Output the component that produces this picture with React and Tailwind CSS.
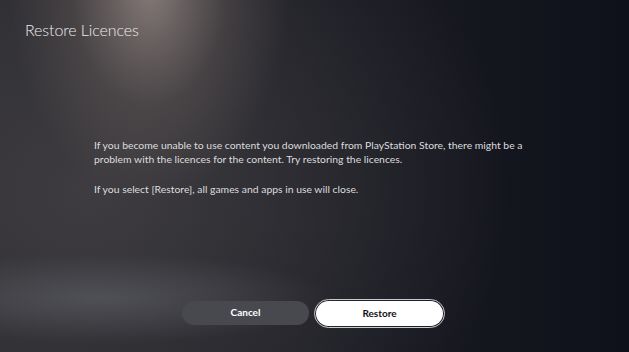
export default function App() {
  return (
    <div
      className="flex h-[352px] w-full flex-col overflow-hidden bg-[#12141c] bg-[radial-gradient(ellipse_140px_210px_at_150px_-10px,rgba(165,150,145,0.72),rgba(120,108,104,0.3)_55%,transparent),radial-gradient(ellipse_230px_45px_at_100px_298px,rgba(100,103,110,0.55),transparent),radial-gradient(ellipse_420px_360px_at_90px_190px,rgba(62,60,64,1),rgba(52,51,56,0.6)_55%,transparent),linear-gradient(to_right,#2e2d31,#1a1b23_55%,#0f111a)] font-['Lato','Open_Sans',sans-serif] text-[#e6e6e8]"
    >
      <h1 className="pl-[25px] pt-[20px] text-[16px] font-light leading-[20px] tracking-[-0.1px] text-[#ececec]">
        Restore Licences
      </h1>

      <div className="mt-[99px] pl-[94px] text-[10.4px] leading-[13.5px] text-[#dcdcdf]">
        <p>
          If you become unable to use content you downloaded from PlayStation Store, there might be a
          <br />
          problem with the licences for the content. Try restoring the licences.
        </p>
        <p className="mt-[17px]">
          If you select [Restore], all games and apps in use will close.
        </p>
      </div>

      <div className="mt-[104px] flex justify-center gap-[7px] pr-[4px]">
        <button className="h-[24px] w-[127px] rounded-full bg-[#47494e] text-[10px] font-bold text-white">
          Cancel
        </button>
        <button className="h-[25px] w-[127px] rounded-full bg-white text-[10px] font-bold text-[#111] outline outline-1 outline-offset-1 outline-[#c9c9cf]">
          Restore
        </button>
      </div>
    </div>
  );
}
